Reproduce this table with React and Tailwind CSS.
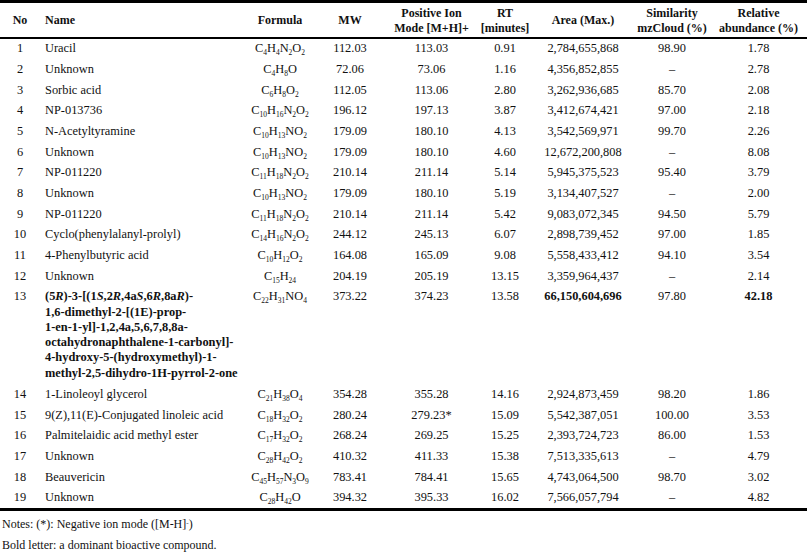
import React from 'react';

const F = (s) => {
  const parts = [];
  const re = /([A-Z][a-z]?)(\d*)/g;
  let m;
  while ((m = re.exec(s)) !== null) {
    if (!m[0]) break;
    parts.push([m[1], m[2]]);
  }
  return parts;
};

const rows = [
  [1, 'Uracil', 'C4H4N2O2', '112.03', '113.03', '0.91', '2,784,655,868', '98.90', '1.78'],
  [2, 'Unknown', 'C4H8O', '72.06', '73.06', '1.16', '4,356,852,855', '–', '2.78'],
  [3, 'Sorbic acid', 'C6H8O2', '112.05', '113.06', '2.80', '3,262,936,685', '85.70', '2.08'],
  [4, 'NP-013736', 'C10H16N2O2', '196.12', '197.13', '3.87', '3,412,674,421', '97.00', '2.18'],
  [5, 'N-Acetyltyramine', 'C10H13NO2', '179.09', '180.10', '4.13', '3,542,569,971', '99.70', '2.26'],
  [6, 'Unknown', 'C10H13NO2', '179.09', '180.10', '4.60', '12,672,200,808', '–', '8.08'],
  [7, 'NP-011220', 'C11H18N2O2', '210.14', '211.14', '5.14', '5,945,375,523', '95.40', '3.79'],
  [8, 'Unknown', 'C10H13NO2', '179.09', '180.10', '5.19', '3,134,407,527', '–', '2.00'],
  [9, 'NP-011220', 'C11H18N2O2', '210.14', '211.14', '5.42', '9,083,072,345', '94.50', '5.79'],
  [10, 'Cyclo(phenylalanyl-prolyl)', 'C14H16N2O2', '244.12', '245.13', '6.07', '2,898,739,452', '97.00', '1.85'],
  [11, '4-Phenylbutyric acid', 'C10H12O2', '164.08', '165.09', '9.08', '5,558,433,412', '94.10', '3.54'],
  [12, 'Unknown', 'C15H24', '204.19', '205.19', '13.15', '3,359,964,437', '–', '2.14'],
  [13, null, 'C22H31NO4', '373.22', '374.23', '13.58', '66,150,604,696', '97.80', '42.18'],
  [14, '1-Linoleoyl glycerol', 'C21H38O4', '354.28', '355.28', '14.16', '2,924,873,459', '98.20', '1.86'],
  [15, '9(Z),11(E)-Conjugated linoleic acid', 'C18H32O2', '280.24', '279.23*', '15.09', '5,542,387,051', '100.00', '3.53'],
  [16, 'Palmitelaidic acid methyl ester', 'C17H32O2', '268.24', '269.25', '15.25', '2,393,724,723', '86.00', '1.53'],
  [17, 'Unknown', 'C28H42O2', '410.32', '411.33', '15.38', '7,513,335,613', '–', '4.79'],
  [18, 'Beauvericin', 'C45H57N3O9', '783.41', '784.41', '15.65', '4,743,064,500', '98.70', '3.02'],
  [19, 'Unknown', 'C28H42O', '394.32', '395.33', '16.02', '7,566,057,794', '–', '4.82'],
];

function Formula({ s }) {
  return (
    <span className="whitespace-nowrap">
      {F(s).map(([el, n], i) => (
        <React.Fragment key={i}>
          {el}
          {n && <span className="text-[7.5px] align-[-2.5px] leading-none">{n}</span>}
        </React.Fragment>
      ))}
    </span>
  );
}

const I = ({ children }) => <i>{children}</i>;

function Row13Name() {
  return (
    <span className="font-bold">
      (5<I>R</I>)-3-[(1<I>S</I>,2<I>R</I>,4a<I>S</I>,6<I>R</I>,8a<I>R</I>)-<br />
      1,6-dimethyl-2-[(1E)-prop-<br />
      1-en-1-yl]-1,2,4a,5,6,7,8,8a-<br />
      octahydronaphthalene-1-carbonyl]-<br />
      4-hydroxy-5-(hydroxymethyl)-1-<br />
      methyl-2,5-dihydro-1H-pyrrol-2-one
    </span>
  );
}

export default function App() {
  return (
    <div className="w-[807px] h-[553px] bg-white text-[#111] overflow-hidden" style={{ fontFamily: '"Liberation Serif", "Times New Roman", serif' }}>
      <table className="w-[807px] table-fixed border-collapse text-[12.4px] leading-[15.3px]">
        <colgroup>
          <col className="w-[40px]" />
          <col className="w-[205px]" />
          <col className="w-[70px]" />
          <col className="w-[70px]" />
          <col className="w-[93px]" />
          <col className="w-[54px]" />
          <col className="w-[102px]" />
          <col className="w-[76px]" />
          <col className="w-[97px]" />
        </colgroup>
        <thead>
          <tr className="border-t-[3px] border-b-[2px] border-black text-[12px] leading-[15px] font-bold h-[36px]">
            <th className="text-center font-bold pt-[2px]">No</th>
            <th className="text-left pl-[5px] font-bold pt-[2px]">Name</th>
            <th className="text-center font-bold pt-[2px]">Formula</th>
            <th className="text-center font-bold pt-[2px]">MW</th>
            <th className="text-center font-bold pt-[2px]">Positive Ion<br />Mode [M+H]+</th>
            <th className="text-center font-bold pt-[2px]">RT<br />[minutes]</th>
            <th className="text-center font-bold pt-[2px]">Area (Max.)</th>
            <th className="text-center font-bold pt-[2px]">Similarity<br />mzCloud (%)</th>
            <th className="text-center font-bold pt-[2px]">Relative<br />abundance (%)</th>
          </tr>
        </thead>
        <tbody>
          {rows.map((r, idx) => {
            const big = r[0] === 13;
            const last = idx === rows.length - 1;
            const pad = big ? 'pt-[2.7px] pb-[3.2px]' : 'py-[2.7px]';
            const td = pad + ' text-center align-top';
            return (
              <tr key={r[0]} className={last ? 'border-b-[3px] border-black' : ''}>
                <td className={td}>{r[0]}</td>
                <td className={pad + ' pl-[5px] text-left align-top'}>{big ? <Row13Name /> : r[1]}</td>
                <td className={td}><Formula s={r[2]} /></td>
                <td className={td}>{r[3]}</td>
                <td className={td}>{r[4]}</td>
                <td className={td}>{r[5]}</td>
                <td className={td + (big ? ' font-bold' : '')}>{r[6]}</td>
                <td className={td}>{r[7]}</td>
                <td className={td + (big ? ' font-bold' : '')}>{r[8]}</td>
              </tr>
            );
          })}
        </tbody>
      </table>
      <div className="pl-[2px] text-[12px] leading-[15px] flex flex-col gap-[6px] mt-[6px]">
        <div>Notes: (*): Negative ion mode ([M-H]<sup className="text-[7px]">-</sup>)</div>
        <div>Bold letter: a dominant bioactive compound.</div>
      </div>
    </div>
  );
}
